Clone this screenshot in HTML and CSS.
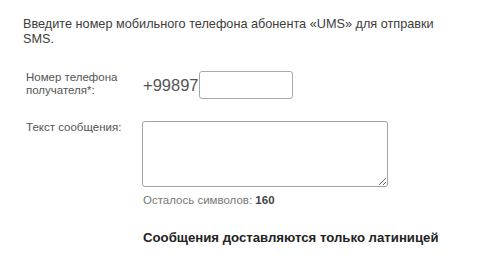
FILE: index.html
```html
<!DOCTYPE html>
<html lang="ru">
<head>
<meta charset="utf-8">
<link rel="stylesheet" href="styles.css">
</head>
<body>
<div class="page">
  <p class="intro">Введите номер мобильного телефона абонента «UMS» для отправки SMS.</p>
  <div class="row row-phone">
    <label class="label">Номер телефона получателя*:</label>
    <div class="field phone">
      <span class="prefix">+99897</span>
      <input class="phone-input" type="text">
    </div>
  </div>
  <div class="row row-text">
    <label class="label">Текст сообщения:</label>
    <div class="field">
      <textarea class="message"></textarea>
      <div class="counter">Осталось символов: <b>160</b></div>
      <div class="note">Сообщения доставляются только латиницей</div>
    </div>
  </div>
</div>
</body>
</html>
```

FILE: styles.css
```css
html, body {
  margin: 0;
  background: #fff;
}
.page {
  font-family: "Liberation Sans", Arial, sans-serif;
  padding: 17px 0 0 23px;
}
.intro {
  margin: 0;
  font-size: 12.7px;
  line-height: 15px;
  color: #3c3c3c;
  width: 445px;
}
.row {
  display: grid;
  grid-template-columns: 119px 1fr;
  align-items: start;
}
.row-phone {
  margin-top: 24px;
}
.row-text {
  margin-top: 22px;
}
.label {
  padding-left: 3px;
  font-size: 11.5px;
  line-height: 13px;
  color: #555;
  width: 96px;
}
.phone {
  display: flex;
  align-items: center;
}
.prefix {
  font-size: 16.5px;
  line-height: 28px;
  color: #555;
  margin-left: 1px;
}
.phone-input {
  box-sizing: border-box;
  width: 94px;
  height: 28px;
  border: 1px solid #a9a9a9;
  border-radius: 3px;
  margin: 0;
  padding: 0 4px;
  background: #fff;
}
.message {
  display: block;
  box-sizing: border-box;
  width: 246px;
  height: 66px;
  border: 1px solid #a3a3a3;
  border-radius: 3px;
  margin: 0;
  padding: 2px;
  background: #fff;
}
.counter {
  margin-top: 7px;
  margin-left: 1px;
  font-size: 11.5px;
  line-height: 13px;
  color: #777;
}
.counter b {
  color: #444;
}
.note {
  margin-top: 23px;
  margin-left: 1px;
  font-size: 13.2px;
  line-height: 15px;
  font-weight: bold;
  color: #222;
}
```
